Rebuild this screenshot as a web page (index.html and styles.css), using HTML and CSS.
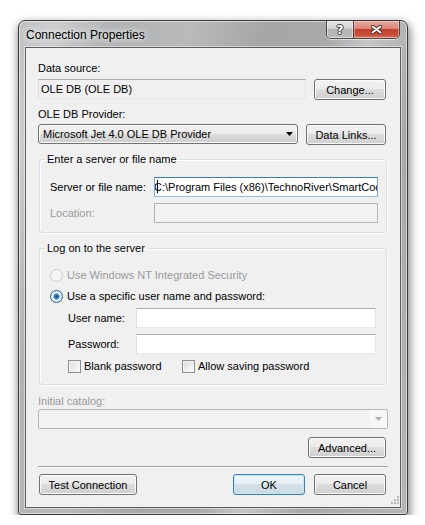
FILE: index.html
```html
<!DOCTYPE html>
<html lang="en">
  <head>
    <meta charset="utf-8" />
    <title>Connection Properties</title>
    <link rel="stylesheet" href="styles.css">
  </head>

  <body>
    <!--Dialog window-->
    <div class="window">
      <div class="titlebar">
        <span class="title">Connection Properties</span>
        <div class="caption">
          <span class="cap-help">?</span>
          <span class="cap-close">
            <svg width="11" height="9" viewBox="0 0 11 9">
              <path d="M1.5 1.5L9.5 7.5M9.5 1.5L1.5 7.5" stroke="#3b2320" stroke-width="3.6" stroke-linecap="round"/>
              <path d="M1.5 1.5L9.5 7.5M9.5 1.5L1.5 7.5" stroke="#ffffff" stroke-width="2" stroke-linecap="round"/>
            </svg>
          </span>
        </div>
      </div>

      <div class="client">
        <div class="label lblSource">Data source:</div>
        <div class="row rowSource">
          <div class="textbox readonly boxSource">OLE DB (OLE DB)</div>
          <button class="btn btnChange">Change...</button>
        </div>

        <div class="label lblProvider">OLE DB Provider:</div>
        <div class="row rowProvider">
          <div class="combo comboProvider">
            <span>Microsoft Jet 4.0 OLE DB Provider</span>
            <svg width="7" height="4" viewBox="0 0 7 4"><path d="M0 0H7L3.5 4Z" fill="#000"/></svg>
          </div>
          <button class="btn btnLinks">Data Links...</button>
        </div>

        <!--Server group-->
        <fieldset class="group groupServer">
          <legend>Enter a server or file name</legend>
          <div class="fieldRow">
            <span class="fieldLabel">Server or file name:</span>
            <div class="textbox focused boxServer"><span class="caret"></span>C:\Program Files (x86)\TechnoRiver\SmartCodeStudio\Samples\Database.mdb</div>
          </div>
          <div class="fieldRow">
            <span class="fieldLabel disabled">Location:</span>
            <div class="textbox disabledBox boxServer"></div>
          </div>
        </fieldset>

        <!--Logon group-->
        <fieldset class="group groupLogon">
          <legend>Log on to the server</legend>
          <div class="radioRow disabled">
            <span class="radio radioOff"></span>Use Windows NT Integrated Security
          </div>
          <div class="radioRow radioRow2">
            <span class="radio radioOn"></span>Use a specific user name and password:
          </div>
          <div class="fieldRow subRow">
            <span class="fieldLabel">User name:</span>
            <div class="textbox boxUser"></div>
          </div>
          <div class="fieldRow subRow">
            <span class="fieldLabel">Password:</span>
            <div class="textbox boxUser"></div>
          </div>
          <div class="checkRow subRow">
            <span class="checkItem"><span class="checkbox"></span>Blank password</span>
            <span class="checkItem"><span class="checkbox"></span>Allow saving password</span>
          </div>
        </fieldset>

        <div class="label lblCatalog disabled">Initial catalog:</div>
        <div class="comboDisabled">
          <svg width="7" height="4" viewBox="0 0 7 4"><path d="M0 0H7L3.5 4Z" fill="#a9a9a9"/></svg>
        </div>

        <div class="row rowAdvanced">
          <button class="btn btnAdvanced">Advanced...</button>
        </div>

        <div class="separator"></div>

        <div class="row rowFooter">
          <button class="btn btnTest">Test Connection</button>
          <button class="btn btnDefault btnOk">OK</button>
          <button class="btn btnCancel">Cancel</button>
        </div>

        <!--size grip in the corner-->
        <svg class="grip" width="8" height="8" viewBox="0 0 8 8">
          <rect x="6" y="0" width="2" height="2" fill="#b8b8b8"/>
          <rect x="3" y="3" width="2" height="2" fill="#b8b8b8"/>
          <rect x="6" y="3" width="2" height="2" fill="#b8b8b8"/>
          <rect x="0" y="6" width="2" height="2" fill="#b8b8b8"/>
          <rect x="3" y="6" width="2" height="2" fill="#b8b8b8"/>
          <rect x="6" y="6" width="2" height="2" fill="#b8b8b8"/>
        </svg>
      </div>
    </div>
  </body>
</html>
```

FILE: styles.css
```css
body {margin: 0;
      background-color: #ffffff;
      font-family: "Liberation Sans", Arial, sans-serif;
      font-size: 11px;
      color: #000000;}

/* window frame */
.window {margin: 20px 0 0 18px;
         width: 390px;
         height: 495px;
         box-sizing: border-box;
         padding: 0 6px 6px 6px;
         border: 1px solid #3a3a3a;
         border-radius: 7px 7px 3px 3px;
         background: linear-gradient(105deg, #bfc1c3 0%, #cbcdcf 7%, #b0b2b4 18%, #b8babc 33%, #a4a6a8 48%, #a8aaac 60%, #c3c5c7 68%, #a6a8aa 80%, #b3b5b7 100%);
         box-shadow: inset 0 0 0 1px rgba(255,255,255,0.5), 1px 4px 10px 1px rgba(0,0,0,0.5);}

.titlebar {display: flex;
           height: 26px;}

.title {align-self: center;
        padding: 2px 0 0 1px;
        font-size: 12px;
        text-shadow: 0 0 6px #ffffff, 0 0 10px rgba(255,255,255,0.8);}

.caption {display: flex;
          margin-left: auto;
          margin-right: 1px;
          height: 18px;
          box-sizing: border-box;
          border: 1px solid #4a4a4a;
          border-top: none;
          border-radius: 0 0 5px 5px;
          overflow: hidden;
          box-shadow: 0 1px 0 rgba(255,255,255,0.55);}

.cap-help {width: 26px;
           display: flex;
           align-items: center;
           justify-content: center;
           font-family: "DejaVu Sans", sans-serif;
           font-weight: bold;
           font-size: 12px;
           color: #ffffff;
           text-shadow: -1px 0 #3a3a3a, 1px 0 #3a3a3a, 0 -1px #3a3a3a, 0 1px #3a3a3a;
           background: linear-gradient(#e4e4e4 0%, #d0d0d0 45%, #b3b3b3 50%, #bdbdbd 100%);
           box-shadow: inset 0 0 0 1px rgba(255,255,255,0.5);}

.cap-close {width: 45px;
            display: flex;
            align-items: center;
            justify-content: center;
            border-left: 1px solid #5a3531;
            background: linear-gradient(#e8aa9e 0%, #d8857a 45%, #c2412b 50%, #c9503a 85%, #e08b6e 100%);
            box-shadow: inset 0 0 0 1px rgba(255,255,255,0.35);}

/* client area */
.client {position: relative;
         height: 461px;
         box-sizing: border-box;
         padding: 0 12px;
         border: 1px solid #5e5e5e;
         background-color: #f0f0f0;
         box-shadow: 0 0 0 1px rgba(255,255,255,0.45);}

.label {height: 14px;
        line-height: 14px;}

.disabled {color: #9a9a9a;}

.row {display: flex;
      align-items: flex-start;}

.lblSource {margin-top: 13px;}
.rowSource {margin-top: 4px; height: 21px;}
.lblProvider {margin-top: 7px;}
.rowProvider {margin-top: 3px; height: 21px;}

.textbox {box-sizing: border-box;
          height: 20px;
          padding: 0 2px;
          line-height: 18px;
          white-space: nowrap;
          overflow: hidden;
          border: 1px solid;
          border-color: #abadb3 #e2e3ea #e3e9ef #dbdfe6;
          background-color: #ffffff;}

.readonly {background-color: #f0f0f0;}
.focused {border-color: #3d7bad #79acd6 #8dbde2 #79acd6;}
.disabledBox {background-color: #f2f2f2;
              border-color: #b4b6b9;}

.caret {display: inline-block;
        width: 1px;
        height: 13px;
        margin-right: -4px;
        vertical-align: -2px;
        background-color: #000000;}

.boxSource {width: 268px;}
.btnChange {width: 72px; margin-left: 8px;}

.btn {box-sizing: border-box;
      height: 21px;
      padding: 0;
      font: inherit;
      color: #000000;
      border: 1px solid #707070;
      border-radius: 3px;
      background: linear-gradient(#f2f2f2 0%, #ebebeb 49%, #dddddd 50%, #cfcfcf 100%);
      box-shadow: inset 0 0 0 1px #fbfbfb;}

.btnDefault {border-color: #3c7fb1;
             background: linear-gradient(#f0f6f9 0%, #e6eef3 49%, #d6e2ea 50%, #cbd9e3 100%);
             box-shadow: inset 0 0 0 1px #bfe8f8;}

.combo {box-sizing: border-box;
        width: 260px;
        height: 20px;
        padding: 0 4px;
        display: flex;
        align-items: center;
        justify-content: space-between;
        border: 1px solid #707070;
        border-radius: 3px;
        background: linear-gradient(#f2f2f2 0%, #ebebeb 49%, #dddddd 50%, #cfcfcf 100%);
        box-shadow: inset 0 0 0 1px #fbfbfb;}

.btnLinks {width: 80px; margin-left: 8px;}

/* group boxes */
.group {margin: 7px 1px 0;
        padding: 11px 8px 9px 10px;
        border: 1px solid #d5dfe5;
        border-radius: 3px;
        box-shadow: inset 1px 1px 0 #ffffff, 1px 1px 0 #ffffff;}

.group legend {padding: 0 2px;
               margin-left: -5px;
               line-height: 14px;}

.groupLogon {margin-top: 8px;
             padding: 13px 10px 11px 10px;}

.fieldRow {display: flex;
           align-items: center;
           height: 20px;}

.fieldRow + .fieldRow {margin-top: 6px;}

.groupServer .fieldLabel {width: 104px;}
.boxServer {width: 224px;}

.radioRow {display: flex;
           align-items: center;
           height: 14px;}

.radioRow2 {margin-top: 7px;}

.radio {width: 13px;
        height: 13px;
        box-sizing: border-box;
        margin-right: 4px;
        border-radius: 50%;}

.radioOff {border: 1px solid #c9c9c9;
           background-color: #f4f4f4;}

.radioOn {border: 1px solid #2c628b;
          background: radial-gradient(circle, #0d4a8a 0, #2f7bc4 2px, #86b8e0 3px, #eef2f5 3.6px, #dfe5ea 6px);}

.subRow {margin-left: 18px;}
.radioRow2 + .subRow {margin-top: 5px;}
.groupLogon .fieldLabel {width: 68px;}
.boxUser {width: 240px;}

.checkRow {display: flex;
           align-items: center;
           height: 14px;
           margin-top: 5px;}

.checkItem {display: flex;
            align-items: center;}

.checkItem:first-child {width: 114px;}

.checkbox {width: 13px;
           height: 13px;
           box-sizing: border-box;
           margin-right: 3px;
           border: 1px solid #8e8f8f;
           background: linear-gradient(135deg, #dcdcdc, #fdfdfd);
           box-shadow: inset 0 0 0 1px #f4f4f4;}

.lblCatalog {margin-top: 9px;}

.comboDisabled {box-sizing: border-box;
                height: 20px;
                margin-top: 1px;
                padding-right: 5px;
                display: flex;
                align-items: center;
                justify-content: flex-end;
                border: 1px solid #b4b8bb;
                border-radius: 2px;
                background: linear-gradient(to right, #f2f2f2 95%, #f7f7f7 95%);}

.rowAdvanced {margin-top: 8px;
              justify-content: flex-end;
              padding-right: 2px;}

.btnAdvanced {width: 78px;}

.separator {margin-top: 8px;
            height: 1px;
            background-color: #a0a0a0;
            border-bottom: 1px solid #ffffff;}

.rowFooter {margin-top: 6px;
            padding: 0 2px 0 1px;}

.btnTest {width: 98px;}
.btnOk {width: 72px; margin-left: auto;}
.btnCancel {width: 72px; margin-left: 9px;}

.grip {position: absolute;
       right: 1px;
       bottom: 3px;}
```
